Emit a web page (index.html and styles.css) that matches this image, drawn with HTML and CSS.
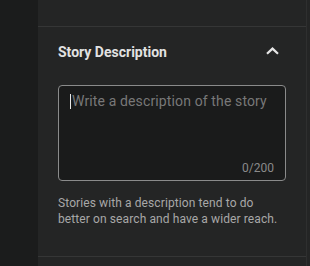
FILE: index.html
```html
<!DOCTYPE html>
<html>
<head>
<meta charset="utf-8">
<link rel="stylesheet" href="styles.css">
</head>
<body>
<div class="app">
  <div class="rail"></div>
  <div class="panel">
    <div class="top"></div>
    <section class="section">
      <div class="head">
        <h2 class="title">Story Description</h2>
        <svg class="chev" width="13" height="8" viewBox="0 0 13 8"><path d="M1 6.8 L6.5 1.6 L12 6.8" fill="none" stroke="#e6e6e6" stroke-width="2.2"/></svg>
      </div>
      <div class="field">
        <div class="placeholder"><span class="caret"></span>Write a description of the story</div>
        <div class="count">0/200</div>
      </div>
      <p class="help">Stories with a description tend to do better on search and have a wider reach.</p>
    </section>
  </div>
  <div class="edge"></div>
</div>
</body>
</html>
```
FILE: styles.css
```css
html, body { margin: 0; padding: 0; background: #242525; }
body { font-family: Roboto, "Noto Sans", sans-serif; }
.app { display: flex; width: 310px; height: 266px; overflow: hidden; }
.rail { width: 38px; flex: none; background: #1b1c1c; }
.panel { width: 268px; flex: none; background: #242525; border-right: 1px solid #2e2f2f; display: flex; flex-direction: column; }
.edge { flex: 1; background: #242525; }
.top { height: 26px; border-bottom: 1px solid #353636; }
.section { padding: 0 20px; border-bottom: 1px solid #353636; height: 230px; box-sizing: border-box; }
.head { display: flex; align-items: center; justify-content: space-between; height: 48px; padding-right: 7px; }
.title { margin: 0; font-size: 14px; font-weight: 700; color: #e2e2e2; padding-top: 1px; }
.chev { display: block; }
.field { position: relative; height: 96px; border: 1px solid #8a8b8b; border-radius: 4px; background: #1a1b1b; box-sizing: border-box; margin-top: 10px; }
.placeholder { position: absolute; left: 11px; top: 6px; font-size: 14px; letter-spacing: 0.13px; color: #787878; line-height: 18px; }
.caret { display: inline-block; width: 1px; height: 15px; background: #e8e8e8; vertical-align: -3px; margin-right: 1px; }
.count { position: absolute; right: 11px; bottom: 5px; font-size: 12px; color: #8a8a8a; }
.help { margin: 14px 0 0; font-size: 12px; letter-spacing: 0.1px; line-height: 16px; color: #a8a8a8; }
```
